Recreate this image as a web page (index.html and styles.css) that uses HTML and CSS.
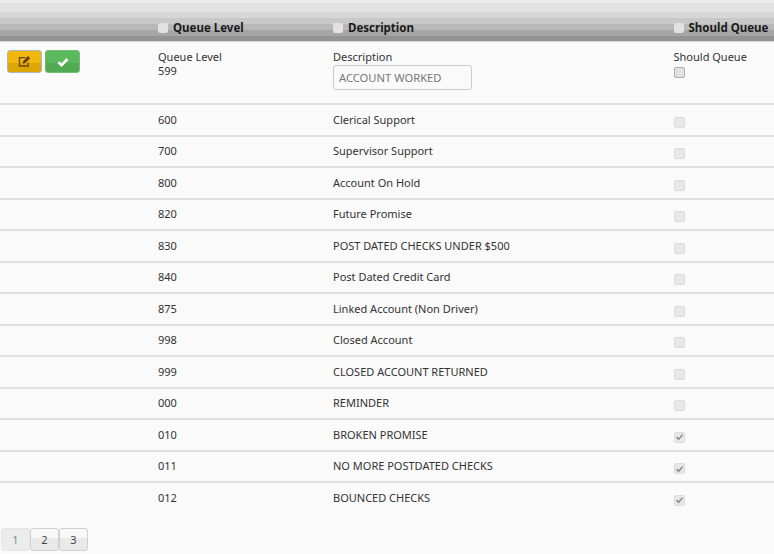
FILE: index.html
```html
<!DOCTYPE html>
<html lang="en">
<head>
<meta charset="utf-8">
<title>Queue Levels</title>
<link rel="stylesheet" href="styles.css">
</head>
<body>
<div class="grid">
  <div class="row head">
    <div class="cell"></div>
    <div class="cell"><span class="hbox"></span>Queue Level</div>
    <div class="cell"><span class="hbox"></span>Description</div>
    <div class="cell"><span class="hbox"></span>Should Queue</div>
  </div>
  <div class="row edit">
    <div class="cell actions">
      <button class="btn btn-edit" aria-label="Edit">
        <svg viewBox="0 0 14 14" width="13" height="13"><path d="M11 8v3.8H1.6V2.8H8" fill="none" stroke="#6b4a08" stroke-width="1.5"/><path d="M5 9.2 5.6 6.6 10.8 1.2l2.2 2.2-5.2 5.2z" fill="#5a3e08"/></svg>
      </button>
      <button class="btn btn-ok" aria-label="Save">
        <svg viewBox="0 0 12 12" width="12" height="12"><path d="M1.5 6.2 4.6 9.2 10.5 3" fill="none" stroke="#fff" stroke-width="2.6"/></svg>
      </button>
    </div>
    <div class="cell stack"><span>Queue Level</span><span>599</span></div>
    <div class="cell stack"><span>Description</span><input class="field" value="ACCOUNT WORKED"></div>
    <div class="cell stack"><span>Should Queue</span><span class="box box-live"></span></div>
  </div>
  <div class="row"><div class="cell"></div><div class="cell">600</div><div class="cell">Clerical Support</div><div class="cell"><span class="box"></span></div></div>
  <div class="row"><div class="cell"></div><div class="cell">700</div><div class="cell">Supervisor Support</div><div class="cell"><span class="box"></span></div></div>
  <div class="row"><div class="cell"></div><div class="cell">800</div><div class="cell">Account On Hold</div><div class="cell"><span class="box"></span></div></div>
  <div class="row"><div class="cell"></div><div class="cell">820</div><div class="cell">Future Promise</div><div class="cell"><span class="box"></span></div></div>
  <div class="row"><div class="cell"></div><div class="cell">830</div><div class="cell">POST DATED CHECKS UNDER $500</div><div class="cell"><span class="box"></span></div></div>
  <div class="row"><div class="cell"></div><div class="cell">840</div><div class="cell">Post Dated Credit Card</div><div class="cell"><span class="box"></span></div></div>
  <div class="row"><div class="cell"></div><div class="cell">875</div><div class="cell">Linked Account (Non Driver)</div><div class="cell"><span class="box"></span></div></div>
  <div class="row"><div class="cell"></div><div class="cell">998</div><div class="cell">Closed Account</div><div class="cell"><span class="box"></span></div></div>
  <div class="row"><div class="cell"></div><div class="cell">999</div><div class="cell">CLOSED ACCOUNT RETURNED</div><div class="cell"><span class="box"></span></div></div>
  <div class="row"><div class="cell"></div><div class="cell">000</div><div class="cell">REMINDER</div><div class="cell"><span class="box"></span></div></div>
  <div class="row"><div class="cell"></div><div class="cell">010</div><div class="cell">BROKEN PROMISE</div><div class="cell"><span class="box on"><svg viewBox="0 0 12 12" width="10" height="10"><path d="M2 6.2 4.8 9 10 3" fill="none" stroke="#8f8f8f" stroke-width="2.2"/></svg></span></div></div>
  <div class="row"><div class="cell"></div><div class="cell">011</div><div class="cell">NO MORE POSTDATED CHECKS</div><div class="cell"><span class="box on"><svg viewBox="0 0 12 12" width="10" height="10"><path d="M2 6.2 4.8 9 10 3" fill="none" stroke="#8f8f8f" stroke-width="2.2"/></svg></span></div></div>
  <div class="row last"><div class="cell"></div><div class="cell">012</div><div class="cell">BOUNCED CHECKS</div><div class="cell"><span class="box on"><svg viewBox="0 0 12 12" width="10" height="10"><path d="M2 6.2 4.8 9 10 3" fill="none" stroke="#8f8f8f" stroke-width="2.2"/></svg></span></div></div>
</div>
<nav class="pager">
  <button class="page current">1</button>
  <button class="page">2</button>
  <button class="page">3</button>
</nav>
</body>
</html>
```
FILE: styles.css
```css
* { box-sizing: border-box; }
html, body { margin: 0; height: 100%; overflow: hidden; }
body {
  background: #fafafa;
  color: #333;
  font: 11px/14px "Noto Sans", sans-serif;
}
.row {
  display: grid;
  grid-template-columns: 158px 175px 340.5px 100.5px;
  height: 31.5px;
  border-bottom: 2px solid #e0e0e0;
  align-items: center;
}
.row.last { border-bottom-color: transparent; }
.head {
  height: 42px;
  border-bottom: 0;
  color: #1a1a1a;
  font: bold 11.5px/14px "Noto Sans", sans-serif;
  background: linear-gradient(to bottom,
    #ececec 0 3px, #e2e2e2 3px 12px, #d6d6d6 12px 18px, #c8c8c8 18px 24px,
    #b9b9b9 24px 30px, #a6a6a6 30px 36px, #939393 36px 41px, #d8d8d8 41px 42px);
  padding-top: 14px;
}
.head .cell { display: flex; align-items: center; white-space: nowrap; }
.hbox {
  width: 10px; height: 10px; margin-right: 5px;
  background: #e2e2e2; border-radius: 2px;
}
.edit { height: 63px; align-items: start; }
.stack { display: flex; flex-direction: column; align-items: flex-start; padding-top: 8px; }
.actions { display: flex; gap: 3px; padding: 8px 0 0 7px; }
.btn {
  width: 35px; height: 23px; padding: 0;
  display: flex; align-items: center; justify-content: center;
  border-radius: 3px; border: 1px solid;
}
.btn-edit { background: linear-gradient(#f1b70d 0 55%, #dda505 55%); border-color: #a9b6c4; }
.btn-ok { background: linear-gradient(#5cb85c 0 55%, #52a952 55%); border-color: #6fbd6f; }
.field {
  width: 139px; height: 25px; margin-top: 1px; padding: 0 5px;
  font: 11.2px "Noto Sans", sans-serif; color: #777; background: #fafafa;
  border: 1px solid #ccc; border-radius: 3px;
}
.box {
  display: flex; align-items: center; justify-content: center;
  width: 11px; height: 11px;
  background: #e8e8e8; border: 1px solid #dcdcdc; border-radius: 2px;
  margin-top: 5px;
}
.box-live { background: #e2e2e2; border-color: #adadad; margin-top: 3px; }
.pager { display: flex; padding: 13px 0 0 1px; }
.page {
  width: 29px; height: 23px; padding: 0;
  font: 11px "Noto Sans", sans-serif; color: #444;
  background: linear-gradient(#f8f8f8 0 45%, #e9e9e9 45%);
  border: 1px solid #d0d0d0; border-radius: 3px;
}
.current { background: #ececec; color: #888; border-color: #e6e6e6; }
```
